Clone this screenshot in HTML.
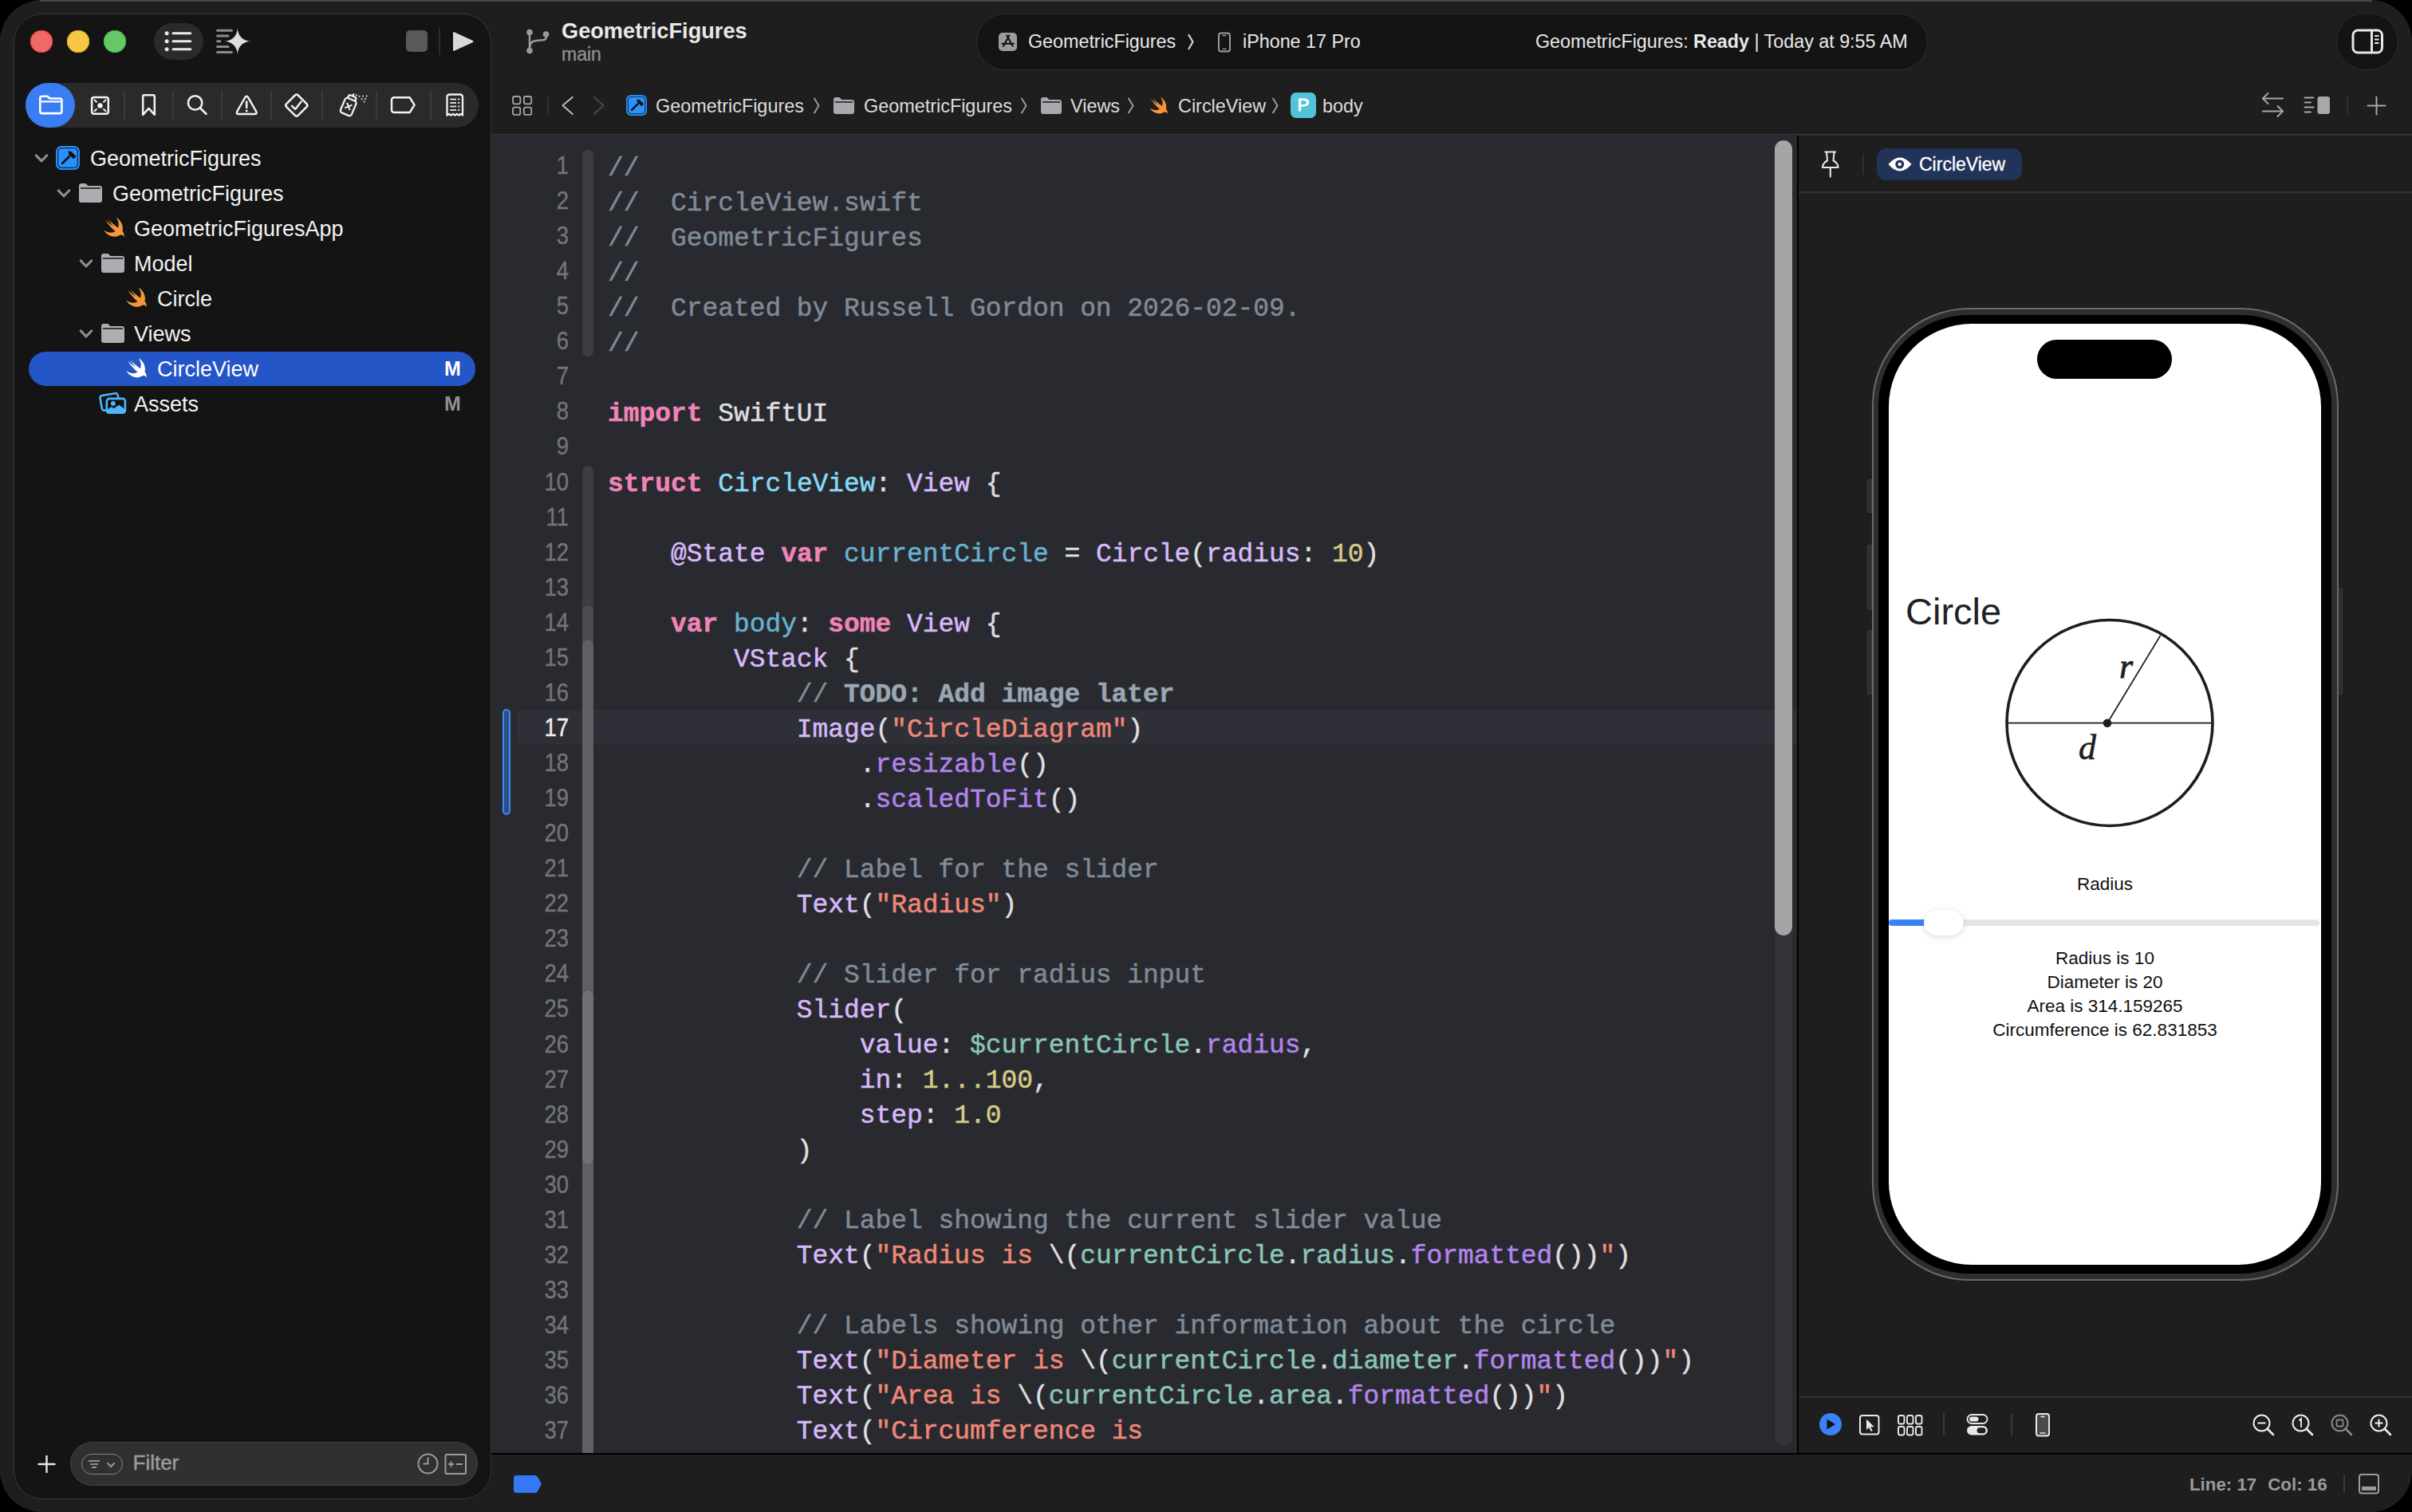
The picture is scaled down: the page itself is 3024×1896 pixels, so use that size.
<!DOCTYPE html>
<html><head><meta charset="utf-8"><title>Xcode</title>
<style>
html,body{margin:0;padding:0;background:#000;width:3024px;height:1896px;overflow:hidden}
*{box-sizing:border-box}
#win{position:absolute;left:0;top:0;width:3024px;height:1896px;border-radius:52px;background:#1e1e1e;overflow:hidden;font-family:"Liberation Sans",sans-serif;color:#e6e6e6}
.a{position:absolute}
.t{position:absolute;white-space:pre;line-height:1}
#side{position:absolute;left:17px;top:17px;width:599px;height:1863px;border-radius:36px;background:#141414;border:1.5px solid #363636}
.tl{position:absolute;width:28px;height:28px;border-radius:50%}
#navpill{position:absolute;left:32px;top:104px;width:568px;height:56px;border-radius:28px;background:#2a2a2a}
#navsel{position:absolute;left:32px;top:104px;width:62px;height:56px;border-radius:28px;background:#3a7cf2}
.navdiv{position:absolute;top:114px;width:2px;height:36px;background:#3a3a3a}
.row{position:absolute;font-size:27px;color:#f2f2f2;line-height:1;white-space:pre}
#sel{position:absolute;left:36px;top:441px;width:560px;height:43px;border-radius:21.5px;background:#2456c8}
#editor{position:absolute;left:616px;top:169px;width:1637px;height:1653px;background:#292a30;overflow:hidden}
.cl{position:absolute;left:146px;height:44px;line-height:44px;font-family:"Liberation Mono",monospace;font-size:32.9px;white-space:pre;-webkit-text-stroke-width:0.5px}
.ln{position:absolute;left:0;width:97px;text-align:right;height:44px;line-height:44px;font-family:"Liberation Sans",sans-serif;font-size:30.5px;color:#747478;transform:scaleX(0.9);transform-origin:97px 50%;-webkit-text-stroke:0.4px currentColor}
.ln.cur{color:#f0f0f0}
#svg{position:absolute;left:0;top:0;width:3024px;height:1896px;pointer-events:none}

.c{color:#7f8b97}
.k{color:#ef85b6}
.td{color:#88daf4}
.od{color:#68b2d2}
.ot{color:#d8b9fb}
.fn{color:#b285ec}
.pv{color:#8ac5b6}
.nu{color:#d6ca86}
.st{color:#ef8878}
.mk{color:#9aa6b3}
.p{color:#dfdfe0}
.k,.mk{font-weight:bold}
</style></head><body>
<div id="win">
<div class="a" style="left:50px;top:0;width:2924px;height:1.5px;background:#4a4a4a"></div>
<!-- sidebar panel -->
<div id="side"></div>
<div class="tl" style="left:38px;top:38px;background:#ee6a67;box-shadow:inset 0 0 0 1px #e2443f"></div>
<div class="tl" style="left:84px;top:38px;background:#f4c845;box-shadow:inset 0 0 0 1px #e0a928"></div>
<div class="tl" style="left:130px;top:38px;background:#66c766;box-shadow:inset 0 0 0 1px #3fb442"></div>
<div class="a" style="left:193px;top:29px;width:62px;height:46px;border-radius:23px;background:#2a2a2a"></div>
<div class="a" style="left:509px;top:38px;width:27px;height:27px;border-radius:5px;background:#595959"></div>
<div class="a" style="left:550px;top:35px;width:2px;height:34px;background:#2c2c2c"></div>

<div id="navpill"></div>
<div id="navsel"></div>
<div class="navdiv" style="left:155px"></div>
<div class="navdiv" style="left:216px"></div>
<div class="navdiv" style="left:277px"></div>
<div class="navdiv" style="left:339px"></div>
<div class="navdiv" style="left:403px"></div>
<div class="navdiv" style="left:471px"></div>
<div class="navdiv" style="left:539px"></div>

<div id="sel"></div>
<div class="row" style="left:113px;top:186.2px">GeometricFigures</div>
<div class="row" style="left:141px;top:230.2px">GeometricFigures</div>
<div class="row" style="left:168px;top:274.2px">GeometricFiguresApp</div>
<div class="row" style="left:168px;top:318.2px">Model</div>
<div class="row" style="left:197px;top:362.2px">Circle</div>
<div class="row" style="left:168px;top:406.2px">Views</div>
<div class="row" style="left:197px;top:450.2px;color:#fff">CircleView</div>
<div class="row" style="left:557px;top:450.2px;color:#fff;font-weight:bold;font-size:25px">M</div>
<div class="row" style="left:168px;top:494.2px">Assets</div>
<div class="row" style="left:557px;top:494.2px;color:#8f8f8f;font-weight:bold;font-size:25px">M</div>

<!-- filter bar -->
<div class="a" style="left:88px;top:1808px;width:511px;height:55px;border-radius:27.5px;background:#303030;border:1.5px solid #444"></div>
<div class="a" style="left:102px;top:1823px;width:51.5px;height:26px;border-radius:13px;border:1.8px solid #858585"></div>
<div class="t" style="left:166.5px;top:1821px;font-size:26px;color:#9b9b9b;-webkit-text-stroke:0.5px #9b9b9b">Filter</div>

<!-- toolbar title -->
<div class="t" style="left:704px;top:25px;font-size:27.2px;font-weight:bold;color:#e8e8e8">GeometricFigures</div>
<div class="t" style="left:704px;top:57px;font-size:23px;color:#8f8f8f;-webkit-text-stroke:0.4px #8f8f8f">main</div>

<!-- scheme pill -->
<div class="a" style="left:1224px;top:17px;width:1193px;height:71px;border-radius:35.5px;background:#141414;border:1.5px solid #2e2e2e"></div>
<div class="a" style="left:1252px;top:41px;width:23px;height:23px;border-radius:5px;background:#9b9b9b"></div>
<div class="t" style="left:1289px;top:40.7px;font-size:23.3px;color:#e8e8e8">GeometricFigures</div>
<div class="t" style="left:1558px;top:40.7px;font-size:23.3px;color:#e8e8e8">iPhone 17 Pro</div>
<div class="t" style="left:1925px;top:40.7px;font-size:23.3px;color:#e8e8e8">GeometricFigures: <b>Ready</b> | Today at 9:55 AM</div>

<!-- inspector button -->
<div class="a" style="left:2929px;top:16px;width:78px;height:72px;border-radius:36px;background:#141414;border:1.5px solid #2e2e2e"></div>

<!-- breadcrumb -->
<div class="a" style="left:1618px;top:116px;width:32px;height:32px;border-radius:7px;background:#52c3d8"></div>
<div class="t" style="left:1626.5px;top:121px;font-size:22.5px;color:#fff;-webkit-text-stroke:0.8px #fff">P</div>
<div class="t" style="left:822px;top:122px;font-size:23.4px;color:#dcdcdc">GeometricFigures</div>
<div class="t" style="left:1083px;top:122px;font-size:23.4px;color:#dcdcdc">GeometricFigures</div>
<div class="t" style="left:1342px;top:122px;font-size:23.4px;color:#dcdcdc">Views</div>
<div class="t" style="left:1477px;top:122px;font-size:23.4px;color:#dcdcdc">CircleView</div>
<div class="t" style="left:1658px;top:122px;font-size:23.4px;color:#dcdcdc">body</div>

<!-- separator below toolbar -->
<div class="a" style="left:616px;top:168px;width:2408px;height:1.5px;background:#343434"></div>

<!-- editor -->
<div id="editor">
  <div class="a" style="left:32px;top:721px;width:1605px;height:44px;border-radius:7px 0 0 7px;background:#2f3037"></div>
  <div class="a" style="left:14px;top:720px;width:10px;height:133px;border-radius:5px;background:#2c4f82;border:2px solid #3d8bf7"></div>
  <div class="a" style="left:114px;top:19px;width:14px;height:259px;border-radius:7px;background:#3c3d42"></div>
  <div class="a" style="left:114px;top:415px;width:14px;height:1300px;border-radius:7px;background:#3c3d42"></div>
  <div class="a" style="left:114px;top:590px;width:14px;height:1200px;border-radius:7px;background:#4b4c51;box-shadow:0 -1px 0 #35363b"></div>
  <div class="a" style="left:114px;top:633px;width:14px;height:1100px;border-radius:7px;background:#5f6065;box-shadow:0 -1px 0 #45464b"></div>
  <div class="a" style="left:114px;top:1073px;width:14px;height:218px;border-radius:7px;background:#717175;box-shadow:0 -1px 0 #55565b,0 1px 0 #55565b"></div>
<div class="ln" style="top:16.0px">1</div>
<div class="ln" style="top:60.06px">2</div>
<div class="ln" style="top:104.12px">3</div>
<div class="ln" style="top:148.18px">4</div>
<div class="ln" style="top:192.24px">5</div>
<div class="ln" style="top:236.3px">6</div>
<div class="ln" style="top:280.36px">7</div>
<div class="ln" style="top:324.42px">8</div>
<div class="ln" style="top:368.48px">9</div>
<div class="ln" style="top:412.54px">10</div>
<div class="ln" style="top:456.6px">11</div>
<div class="ln" style="top:500.66px">12</div>
<div class="ln" style="top:544.72px">13</div>
<div class="ln" style="top:588.78px">14</div>
<div class="ln" style="top:632.84px">15</div>
<div class="ln" style="top:676.9000000000001px">16</div>
<div class="ln cur" style="top:720.96px">17</div>
<div class="ln" style="top:765.02px">18</div>
<div class="ln" style="top:809.08px">19</div>
<div class="ln" style="top:853.1400000000001px">20</div>
<div class="ln" style="top:897.2px">21</div>
<div class="ln" style="top:941.26px">22</div>
<div class="ln" style="top:985.32px">23</div>
<div class="ln" style="top:1029.38px">24</div>
<div class="ln" style="top:1073.44px">25</div>
<div class="ln" style="top:1117.5px">26</div>
<div class="ln" style="top:1161.56px">27</div>
<div class="ln" style="top:1205.6200000000001px">28</div>
<div class="ln" style="top:1249.68px">29</div>
<div class="ln" style="top:1293.74px">30</div>
<div class="ln" style="top:1337.8000000000002px">31</div>
<div class="ln" style="top:1381.8600000000001px">32</div>
<div class="ln" style="top:1425.92px">33</div>
<div class="ln" style="top:1469.98px">34</div>
<div class="ln" style="top:1514.04px">35</div>
<div class="ln" style="top:1558.1000000000001px">36</div>
<div class="ln" style="top:1602.16px">37</div>
<div class="cl" style="top:20.5px"><span class="c">//</span></div>
<div class="cl" style="top:64.5px"><span class="c">//  CircleView.swift</span></div>
<div class="cl" style="top:108.5px"><span class="c">//  GeometricFigures</span></div>
<div class="cl" style="top:152.5px"><span class="c">//</span></div>
<div class="cl" style="top:196.5px"><span class="c">//  Created by Russell Gordon on 2026-02-09.</span></div>
<div class="cl" style="top:240.5px"><span class="c">//</span></div>
<div class="cl" style="top:284.5px"></div>
<div class="cl" style="top:328.5px"><span class="k">import</span><span class="p"> SwiftUI</span></div>
<div class="cl" style="top:372.5px"></div>
<div class="cl" style="top:416.5px"><span class="k">struct</span><span class="p"> </span><span class="td">CircleView</span><span class="p">: </span><span class="ot">View</span><span class="p"> {</span></div>
<div class="cl" style="top:460.5px"></div>
<div class="cl" style="top:504.5px"><span class="p">    </span><span class="ot">@State</span><span class="p"> </span><span class="k">var</span><span class="p"> </span><span class="od">currentCircle</span><span class="p"> = </span><span class="ot">Circle</span><span class="p">(</span><span class="ot">radius</span><span class="p">: </span><span class="nu">10</span><span class="p">)</span></div>
<div class="cl" style="top:548.5px"></div>
<div class="cl" style="top:592.5px"><span class="p">    </span><span class="k">var</span><span class="p"> </span><span class="od">body</span><span class="p">: </span><span class="k">some</span><span class="p"> </span><span class="ot">View</span><span class="p"> {</span></div>
<div class="cl" style="top:636.5px"><span class="p">        </span><span class="ot">VStack</span><span class="p"> {</span></div>
<div class="cl" style="top:680.5px"><span class="p">            </span><span class="c">// </span><span class="mk">TODO: Add image later</span></div>
<div class="cl" style="top:724.5px"><span class="p">            </span><span class="ot">Image</span><span class="p">(</span><span class="st">&quot;CircleDiagram&quot;</span><span class="p">)</span></div>
<div class="cl" style="top:768.5px"><span class="p">                .</span><span class="fn">resizable</span><span class="p">()</span></div>
<div class="cl" style="top:812.5px"><span class="p">                .</span><span class="fn">scaledToFit</span><span class="p">()</span></div>
<div class="cl" style="top:856.5px"></div>
<div class="cl" style="top:900.5px"><span class="p">            </span><span class="c">// Label for the slider</span></div>
<div class="cl" style="top:944.5px"><span class="p">            </span><span class="ot">Text</span><span class="p">(</span><span class="st">&quot;Radius&quot;</span><span class="p">)</span></div>
<div class="cl" style="top:988.5px"></div>
<div class="cl" style="top:1032.5px"><span class="p">            </span><span class="c">// Slider for radius input</span></div>
<div class="cl" style="top:1076.5px"><span class="p">            </span><span class="ot">Slider</span><span class="p">(</span></div>
<div class="cl" style="top:1120.5px"><span class="p">                </span><span class="ot">value</span><span class="p">: </span><span class="pv">$currentCircle</span><span class="p">.</span><span class="fn">radius</span><span class="p">,</span></div>
<div class="cl" style="top:1164.5px"><span class="p">                </span><span class="ot">in</span><span class="p">: </span><span class="nu">1...100</span><span class="p">,</span></div>
<div class="cl" style="top:1208.5px"><span class="p">                </span><span class="ot">step</span><span class="p">: </span><span class="nu">1.0</span></div>
<div class="cl" style="top:1252.5px"><span class="p">            )</span></div>
<div class="cl" style="top:1296.5px"></div>
<div class="cl" style="top:1340.5px"><span class="p">            </span><span class="c">// Label showing the current slider value</span></div>
<div class="cl" style="top:1384.5px"><span class="p">            </span><span class="ot">Text</span><span class="p">(</span><span class="st">&quot;Radius is </span><span class="p">\(</span><span class="pv">currentCircle</span><span class="p">.</span><span class="pv">radius</span><span class="p">.</span><span class="fn">formatted</span><span class="p">())</span><span class="st">&quot;</span><span class="p">)</span></div>
<div class="cl" style="top:1428.5px"></div>
<div class="cl" style="top:1472.5px"><span class="p">            </span><span class="c">// Labels showing other information about the circle</span></div>
<div class="cl" style="top:1516.5px"><span class="p">            </span><span class="ot">Text</span><span class="p">(</span><span class="st">&quot;Diameter is </span><span class="p">\(</span><span class="pv">currentCircle</span><span class="p">.</span><span class="pv">diameter</span><span class="p">.</span><span class="fn">formatted</span><span class="p">())</span><span class="st">&quot;</span><span class="p">)</span></div>
<div class="cl" style="top:1560.5px"><span class="p">            </span><span class="ot">Text</span><span class="p">(</span><span class="st">&quot;Area is </span><span class="p">\(</span><span class="pv">currentCircle</span><span class="p">.</span><span class="pv">area</span><span class="p">.</span><span class="fn">formatted</span><span class="p">())</span><span class="st">&quot;</span><span class="p">)</span></div>
<div class="cl" style="top:1604.5px"><span class="p">            </span><span class="ot">Text</span><span class="p">(</span><span class="st">&quot;Circumference is</span></div>
  <div class="a" style="left:1609px;top:7px;width:22px;height:1637px;border-radius:11px;background:#333439"></div>
  <div class="a" style="left:1609px;top:7px;width:22px;height:997px;border-radius:11px;background:#a5a5a7"></div>
</div>
<div class="a" style="left:2253px;top:170px;width:2px;height:1654px;background:#000"></div>
<div class="a" style="left:616px;top:1822px;width:2408px;height:2px;background:#000"></div>

<!-- preview header -->
<div class="a" style="left:2335px;top:193px;width:1.5px;height:26px;background:#2f2f2f"></div>
<div class="a" style="left:2353px;top:186.2px;width:182px;height:40px;border-radius:12px;background:#22335a"></div>
<div class="t" style="left:2406px;top:195px;font-size:23px;color:#fff;-webkit-text-stroke:0.3px #fff">CircleView</div>
<div class="a" style="left:2255px;top:240px;width:769px;height:1.5px;background:#343434"></div>
<div class="a" style="left:2255px;top:1751px;width:769px;height:1.5px;background:#343434"></div>

<!-- phone -->
<div class="a" style="left:2341px;top:601px;width:6px;height:42px;border-radius:2px 0 0 2px;background:#2e2e2e;border:1px solid #3d3d3d"></div>
<div class="a" style="left:2341px;top:683px;width:6px;height:82px;border-radius:2px 0 0 2px;background:#2e2e2e;border:1px solid #3d3d3d"></div>
<div class="a" style="left:2341px;top:790px;width:6px;height:81px;border-radius:2px 0 0 2px;background:#2e2e2e;border:1px solid #3d3d3d"></div>
<div class="a" style="left:2931px;top:738px;width:6px;height:133px;border-radius:0 2px 2px 0;background:#2e2e2e;border:1px solid #3d3d3d"></div>
<div class="a" style="left:2346.5px;top:386px;width:585.5px;height:1220px;border-radius:122px;background:#2e2e2e;border:2px solid #6a6a6a"></div>
<div class="a" style="left:2355px;top:395px;width:568px;height:1202px;border-radius:113px;background:#000"></div>
<div class="a" style="left:2368px;top:406.2px;width:542px;height:1180px;border-radius:104px;background:#fff;overflow:hidden">
  <div class="a" style="left:186px;top:20px;width:169px;height:49px;border-radius:24.5px;background:#000"></div>
  <div class="t" style="left:21px;top:337px;font-size:47px;color:#222">Circle</div>
  <div class="t" style="left:0;width:542px;text-align:center;top:692px;font-size:22.5px;color:#111">Radius</div>
  <div class="a" style="left:0;top:747px;width:540px;height:8px;border-radius:4px;background:#e5e5ea"></div>
  <div class="a" style="left:0;top:747px;width:50px;height:8px;border-radius:4px 0 0 4px;background:#3a82f7"></div>
  <div class="a" style="left:44px;top:735px;width:50px;height:32px;border-radius:16px;background:#fff;box-shadow:0 2px 8px rgba(0,0,0,.13),0 0 1px rgba(0,0,0,.15)"></div>
  <div class="t" style="left:0;width:542px;text-align:center;top:781px;font-size:22.5px;line-height:29.9px;color:#111">Radius is 10<br>Diameter is 20<br>Area is 314.159265<br>Circumference is 62.831853</div>
</div>

<!-- status bar -->
<div class="t" style="left:2745px;top:1851px;font-size:22.3px;color:#9b9b9b;font-weight:bold">Line: 17<span style="margin-left:14px">Col: 16</span></div>
<div class="a" style="left:2938px;top:1849px;width:1.5px;height:23px;background:#3a3a3a"></div>

<svg id="svg" width="3024" height="1896" viewBox="0 0 3024 1896">
<circle cx="209.1" cy="41.8" r="2.5" fill="#e8e8e8"/>
<line x1="217" y1="41.8" x2="238.7" y2="41.8" stroke="#e8e8e8" stroke-width="3" stroke-linecap="round"/>
<circle cx="209.1" cy="51.7" r="2.5" fill="#e8e8e8"/>
<line x1="217" y1="51.7" x2="238.7" y2="51.7" stroke="#e8e8e8" stroke-width="3" stroke-linecap="round"/>
<circle cx="209.1" cy="61.7" r="2.5" fill="#e8e8e8"/>
<line x1="217" y1="61.7" x2="238.7" y2="61.7" stroke="#e8e8e8" stroke-width="3" stroke-linecap="round"/>
<line x1="272.5" y1="38.2" x2="290.5" y2="38.2" stroke="#8a8a8a" stroke-width="3" stroke-linecap="round"/>
<line x1="272.5" y1="45" x2="286" y2="45" stroke="#8a8a8a" stroke-width="3" stroke-linecap="round"/>
<line x1="272.5" y1="51.7" x2="276" y2="51.7" stroke="#8a8a8a" stroke-width="3" stroke-linecap="round"/>
<line x1="272.5" y1="58.4" x2="286" y2="58.4" stroke="#8a8a8a" stroke-width="3" stroke-linecap="round"/>
<line x1="272.5" y1="65.4" x2="290.5" y2="65.4" stroke="#8a8a8a" stroke-width="3" stroke-linecap="round"/>
<path d="M297.8,34.400000000000006 C297.8,44.78 304.72,51.7 315.1,51.7 C304.72,51.7 297.8,58.620000000000005 297.8,69.0 C297.8,58.620000000000005 290.88,51.7 280.5,51.7 C290.88,51.7 297.8,44.78 297.8,34.400000000000006z" fill="#dcdcdc" stroke="#141414" stroke-width="2.5" stroke-linejoin="round" paint-order="stroke"/>
<path d="M570,40.5 Q568,39.3 568,41.6 L568,62.4 Q568,64.7 570,63.5 L592.5,53.2 Q594.5,52 592.5,50.8z" fill="#d9d9d9"/>
<path d="M50.3,123 a2.3,2.3 0 0 1 2.3,-2.3 h6.8 l3,2.8 h12.7 a2.3,2.3 0 0 1 2.3,2.3 v14 a2.3,2.3 0 0 1 -2.3,2.3 h-22.5 a2.3,2.3 0 0 1 -2.3,-2.3z" fill="none" stroke="#fff" stroke-width="2.6" stroke-linejoin="round"/>
<line x1="52" y1="127.3" x2="75.8" y2="127.3" stroke="#fff" stroke-width="2.2"/>
<rect x="115.1" y="122" width="20.7" height="20.7" rx="2.8" fill="none" stroke="#f2f2f2" stroke-width="2.5"/>
<circle cx="125.5" cy="132.4" r="3.2" fill="#f2f2f2"/>
<line x1="120.9" y1="127.80000000000001" x2="118.5" y2="125.4" stroke="#f2f2f2" stroke-width="2" stroke-linecap="round"/>
<line x1="130.1" y1="127.80000000000001" x2="132.5" y2="125.4" stroke="#f2f2f2" stroke-width="2" stroke-linecap="round"/>
<line x1="120.9" y1="137.0" x2="118.5" y2="139.4" stroke="#f2f2f2" stroke-width="2" stroke-linecap="round"/>
<line x1="130.1" y1="137.0" x2="132.5" y2="139.4" stroke="#f2f2f2" stroke-width="2" stroke-linecap="round"/>
<path d="M179.2,121 a1.8,1.8 0 0 1 1.8,-1.8 h11 a1.8,1.8 0 0 1 1.8,1.8 v22.8 l-7.3,-8 l-7.3,8z" fill="none" stroke="#f2f2f2" stroke-width="2.5" stroke-linejoin="round"/>
<circle cx="244.6" cy="128.9" r="8.7" fill="none" stroke="#f2f2f2" stroke-width="2.5"/>
<line x1="250.9" y1="135.2" x2="258.4" y2="142.7" stroke="#f2f2f2" stroke-width="2.7" stroke-linecap="round"/>
<path d="M307.1,122.5 Q309.2,119 311.3,122.5 L321,139.5 Q323,143 319,143 L299.4,143 Q295.4,143 297.4,139.5z" fill="none" stroke="#f2f2f2" stroke-width="2.5" stroke-linejoin="round"/>
<line x1="309.2" y1="127.5" x2="309.2" y2="135" stroke="#f2f2f2" stroke-width="2.6" stroke-linecap="round"/>
<circle cx="309.2" cy="139" r="1.5" fill="#f2f2f2"/>
<path d="M369.8,119.5 Q371.8,117.5 373.8,119.5 L384.4,130.1 Q386.4,132.1 384.4,134.1 L373.8,144.7 Q371.8,146.7 369.8,144.7 L359.2,134.1 Q357.2,132.1 359.2,130.1z" fill="none" stroke="#f2f2f2" stroke-width="2.5" stroke-linejoin="round"/>
<polyline points="366,132.8 370.2,137 377.6,127.4" fill="none" stroke="#f2f2f2" stroke-width="2.4" stroke-linecap="round" stroke-linejoin="round"/>
<g transform="translate(-2.6,0) rotate(23 440 131)"><rect x="433" y="124" width="15" height="20" rx="3" fill="none" stroke="#f2f2f2" stroke-width="2.3"/><path d="M435.5,124 v-2.5 a2,2 0 0 1 2,-2 h6 a2,2 0 0 1 2,2 v2.5" fill="none" stroke="#f2f2f2" stroke-width="2.3"/><line x1="440.5" y1="119.5" x2="440.5" y2="116" stroke="#f2f2f2" stroke-width="2.3"/><path d="M437,130 l7,7 M444,130 l-7,7" stroke="#f2f2f2" stroke-width="2"/></g>
<circle cx="446.9" cy="119.2" r="1" fill="#f2f2f2"/>
<circle cx="450.6" cy="120.8" r="1" fill="#f2f2f2"/>
<circle cx="455" cy="120.6" r="1" fill="#f2f2f2"/>
<circle cx="459.6" cy="120.4" r="1" fill="#f2f2f2"/>
<circle cx="453.6" cy="124.2" r="1" fill="#f2f2f2"/>
<circle cx="458" cy="124" r="1" fill="#f2f2f2"/>
<circle cx="456.5" cy="127.6" r="1" fill="#f2f2f2"/>
<path d="M494,122.3 h19.8 l5.8,9.3 l-5.8,9.3 h-19.8 a3,3 0 0 1 -3,-3 v-12.6 a3,3 0 0 1 3,-3z" fill="none" stroke="#f2f2f2" stroke-width="2.5" stroke-linejoin="round"/>
<path d="M560.5,144.5 v-23 a3,3 0 0 1 3,-3 h13.5 a3,3 0 0 1 3,3 v23 l-2.4,-1.6 l-2.4,1.6 l-2.4,-1.6 l-2.4,1.6 l-2.4,-1.6 l-2.4,1.6 l-2.4,-1.6 l-2.4,1.6z" fill="none" stroke="#f2f2f2" stroke-width="2.3" stroke-linejoin="round"/>
<line x1="564.3" y1="124.5" x2="572" y2="124.5" stroke="#f2f2f2" stroke-width="1.7"/><line x1="574" y1="124.5" x2="576.3" y2="124.5" stroke="#f2f2f2" stroke-width="1.7"/>
<line x1="564.3" y1="129" x2="572" y2="129" stroke="#f2f2f2" stroke-width="1.7"/><line x1="574" y1="129" x2="576.3" y2="129" stroke="#f2f2f2" stroke-width="1.7"/>
<line x1="564.3" y1="133.5" x2="572" y2="133.5" stroke="#f2f2f2" stroke-width="1.7"/><line x1="574" y1="133.5" x2="576.3" y2="133.5" stroke="#f2f2f2" stroke-width="1.7"/>
<line x1="564.3" y1="138" x2="572" y2="138" stroke="#f2f2f2" stroke-width="1.7"/><line x1="574" y1="138" x2="576.3" y2="138" stroke="#f2f2f2" stroke-width="1.7"/>
<polyline points="45.2,194.89999999999998 52,201.89999999999998 58.8,194.89999999999998" fill="none" stroke="#8e8e8e" stroke-width="3" stroke-linecap="round" stroke-linejoin="round"/>
<rect x="70" y="183" width="30" height="30" rx="7.0" fill="#2b90f8"/><rect x="72.6" y="185.6" width="24.8" height="24.8" rx="4.8" fill="none" stroke="#0d2f55" stroke-width="1.3"/><g transform="translate(70,183) scale(1.0) rotate(45 15 15)"><rect x="13.6" y="11" width="2.8" height="15" rx="1.4" fill="#111"/><path d="M9.3,8.6 L12.6,6.2 L21.2,6.2 L21.2,10.9 L12.6,10.9z" fill="#111"/></g>
<polyline points="73.2,238.89999999999998 80,245.89999999999998 86.8,238.89999999999998" fill="none" stroke="#8e8e8e" stroke-width="3" stroke-linecap="round" stroke-linejoin="round"/>
<path d="M102,230 h5.4399999999999995 l3,3 h14.560000000000002 a3,3 0 0 1 3,3 v15 a3,3 0 0 1 -3,3 h-23 a3,3 0 0 1 -3,-3 v-18 a3,3 0 0 1 3,-3 z" fill="#aeadb2"/><line x1="101.5" y1="236" x2="125.5" y2="236" stroke="#141414" stroke-width="1.6" stroke-linecap="round"/>
<path d="M13.543 3.41c4.114 2.47 6.545 7.162 5.549 11.131-.024.093-.05.181-.076.272l.002.001c2.062 2.538 1.5 5.258 1.236 4.745-1.072-2.086-3.066-1.568-4.088-1.043a6.803 6.803 0 0 1-.281.158l-.02.012-.002.002c-2.115 1.123-4.957 1.205-7.812-.022a12.568 12.568 0 0 1-5.64-4.838c.649.48 1.35.902 2.097 1.252 3.019 1.414 6.051 1.311 8.197-.002C9.651 12.73 7.101 9.67 5.146 7.191a10.628 10.628 0 0 1-1.005-1.384c2.34 2.142 6.038 4.83 7.365 5.576C8.69 8.408 6.208 4.743 6.324 4.86c4.436 4.47 8.528 6.996 8.528 6.996.154.085.27.154.36.213.085-.215.16-.437.224-.668.708-2.588-.09-5.548-1.893-7.992z" fill="#f7953a" transform="translate(126.33,267.35) scale(1.4300,1.5089)"/>
<polyline points="101.2,326.9 108,333.9 114.8,326.9" fill="none" stroke="#8e8e8e" stroke-width="3" stroke-linecap="round" stroke-linejoin="round"/>
<path d="M130,318 h5.4399999999999995 l3,3 h14.560000000000002 a3,3 0 0 1 3,3 v15 a3,3 0 0 1 -3,3 h-23 a3,3 0 0 1 -3,-3 v-18 a3,3 0 0 1 3,-3 z" fill="#aeadb2"/><line x1="129.5" y1="324" x2="153.5" y2="324" stroke="#141414" stroke-width="1.6" stroke-linecap="round"/>
<path d="M13.543 3.41c4.114 2.47 6.545 7.162 5.549 11.131-.024.093-.05.181-.076.272l.002.001c2.062 2.538 1.5 5.258 1.236 4.745-1.072-2.086-3.066-1.568-4.088-1.043a6.803 6.803 0 0 1-.281.158l-.02.012-.002.002c-2.115 1.123-4.957 1.205-7.812-.022a12.568 12.568 0 0 1-5.64-4.838c.649.48 1.35.902 2.097 1.252 3.019 1.414 6.051 1.311 8.197-.002C9.651 12.73 7.101 9.67 5.146 7.191a10.628 10.628 0 0 1-1.005-1.384c2.34 2.142 6.038 4.83 7.365 5.576C8.69 8.408 6.208 4.743 6.324 4.86c4.436 4.47 8.528 6.996 8.528 6.996.154.085.27.154.36.213.085-.215.16-.437.224-.668.708-2.588-.09-5.548-1.893-7.992z" fill="#f7953a" transform="translate(154.33,355.35) scale(1.4300,1.5089)"/>
<polyline points="101.2,414.9 108,421.9 114.8,414.9" fill="none" stroke="#8e8e8e" stroke-width="3" stroke-linecap="round" stroke-linejoin="round"/>
<path d="M130,406 h5.4399999999999995 l3,3 h14.560000000000002 a3,3 0 0 1 3,3 v15 a3,3 0 0 1 -3,3 h-23 a3,3 0 0 1 -3,-3 v-18 a3,3 0 0 1 3,-3 z" fill="#aeadb2"/><line x1="129.5" y1="412" x2="153.5" y2="412" stroke="#141414" stroke-width="1.6" stroke-linecap="round"/>
<path d="M13.543 3.41c4.114 2.47 6.545 7.162 5.549 11.131-.024.093-.05.181-.076.272l.002.001c2.062 2.538 1.5 5.258 1.236 4.745-1.072-2.086-3.066-1.568-4.088-1.043a6.803 6.803 0 0 1-.281.158l-.02.012-.002.002c-2.115 1.123-4.957 1.205-7.812-.022a12.568 12.568 0 0 1-5.64-4.838c.649.48 1.35.902 2.097 1.252 3.019 1.414 6.051 1.311 8.197-.002C9.651 12.73 7.101 9.67 5.146 7.191a10.628 10.628 0 0 1-1.005-1.384c2.34 2.142 6.038 4.83 7.365 5.576C8.69 8.408 6.208 4.743 6.324 4.86c4.436 4.47 8.528 6.996 8.528 6.996.154.085.27.154.36.213.085-.215.16-.437.224-.668.708-2.588-.09-5.548-1.893-7.992z" fill="#ffffff" transform="translate(154.33,443.85) scale(1.4300,1.5089)"/>
<rect x="126.5" y="494.5" width="22.5" height="19" rx="3" fill="none" stroke="#4db5fa" stroke-width="2.6" transform="rotate(-10 137.7 504)"/><rect x="133.8" y="499.9" width="23.1" height="17.9" rx="3.2" fill="#141414" stroke="#4db5fa" stroke-width="2.6"/><path d="M135,513.2 L140,510 L142.4,512.3 L149.2,507.8 L156,512.4 L156,516.5 Q156,517.5 155,517.5 L136,517.5 Q135,517.5 135,516.5z" fill="#4db5fa"/><circle cx="141.9" cy="506" r="2.9" fill="#4db5fa"/>
<g stroke="#8f8f8f" stroke-width="2.2"><line x1="110.8" y1="1832" x2="125.1" y2="1832"/><line x1="113" y1="1836" x2="123" y2="1836"/><line x1="115" y1="1840" x2="121" y2="1840"/></g><polyline points="134.4,1834.3 139.1,1839 143.8,1834.3" fill="none" stroke="#8f8f8f" stroke-width="2.3" stroke-linejoin="miter"/>
<line x1="58.5" y1="1826" x2="58.5" y2="1846" stroke="#e8e8e8" stroke-width="2.4" stroke-linecap="round"/><line x1="48.5" y1="1836" x2="68.5" y2="1836" stroke="#e8e8e8" stroke-width="2.4" stroke-linecap="round"/>
<circle cx="536.5" cy="1835.5" r="12" fill="none" stroke="#9b9b9b" stroke-width="2"/><polyline points="536.5,1827.5 536.5,1835.5 530.5,1835.5" fill="none" stroke="#9b9b9b" stroke-width="2"/>
<rect x="558.5" y="1824" width="25.5" height="24" rx="1.5" fill="none" stroke="#9b9b9b" stroke-width="2"/><path d="M562,1836 h7 M565.5,1832.5 v7 M572,1836 h8" stroke="#9b9b9b" stroke-width="2"/>
<g fill="none" stroke="#9a9a9a" stroke-width="2.6" stroke-linecap="round"><line x1="664" y1="41" x2="664" y2="63"/><path d="M664,60 q0,-8 8,-9 l10,-1 q3,-0.5 3,-5"/></g><g fill="#9a9a9a"><circle cx="664" cy="40.5" r="3.8"/><circle cx="664" cy="63.5" r="3.8"/><circle cx="684.5" cy="43" r="3.8"/></g>
<g stroke="#111" stroke-width="2" stroke-linecap="round" fill="none"><path d="M1265.2,44.5 l-7.2,13.3 M1262.3,44.5 l7.4,13.3 M1256.5,54.8 h14.4"/></g>
<polyline points="1490.5,44 1495.5,52.5 1490.5,61" fill="none" stroke="#d8d8d8" stroke-width="2.2" stroke-linecap="round" stroke-linejoin="round"/>
<rect x="1528" y="41.5" width="14" height="23" rx="3" fill="none" stroke="#9b9b9b" stroke-width="2"/><line x1="1532.5" y1="44.5" x2="1537.5" y2="44.5" stroke="#9b9b9b" stroke-width="1.5"/><line x1="1532.5" y1="61.5" x2="1537.5" y2="61.5" stroke="#9b9b9b" stroke-width="1.5"/>
<rect x="2950" y="38" width="36.5" height="28" rx="6" fill="none" stroke="#e6e6e6" stroke-width="3"/><line x1="2973.5" y1="38" x2="2973.5" y2="66" stroke="#e6e6e6" stroke-width="3"/><g stroke="#e6e6e6" stroke-width="2" stroke-linecap="round"><line x1="2977.8" y1="45" x2="2981.8" y2="45"/><line x1="2977.8" y1="49.5" x2="2981.8" y2="49.5"/><line x1="2977.8" y1="54" x2="2981.8" y2="54"/></g>
<g fill="none" stroke="#a6a6a6" stroke-width="1.8"><rect x="643" y="121" width="9.3" height="9.3" rx="2.2"/><rect x="656.9" y="121" width="9.3" height="9.3" rx="2.2"/><rect x="643" y="134.6" width="9.3" height="9.3" rx="2.2"/><rect x="656.9" y="134.6" width="9.3" height="9.3" rx="2.2"/></g>
<line x1="687" y1="121" x2="687" y2="143" stroke="#3a3a3a" stroke-width="1.5"/>
<polyline points="717.8,121.8 705.5,132.3 717.8,143" fill="none" stroke="#b8b8b8" stroke-width="2" stroke-linecap="round" stroke-linejoin="round"/>
<polyline points="745,121.8 756.5,132.3 745,143" fill="none" stroke="#4a4a4a" stroke-width="2" stroke-linecap="round" stroke-linejoin="round"/>
<rect x="785" y="119" width="26" height="26" rx="6.066666666666666" fill="#2b90f8"/><rect x="787.2533333333333" y="121.25333333333333" width="21.493333333333332" height="21.493333333333332" rx="4.16" fill="none" stroke="#0d2f55" stroke-width="1.1266666666666667"/><g transform="translate(785,119) scale(0.8666666666666667) rotate(45 15 15)"><rect x="13.6" y="11" width="2.8" height="15" rx="1.4" fill="#111"/><path d="M9.3,8.6 L12.6,6.2 L21.2,6.2 L21.2,10.9 L12.6,10.9z" fill="#111"/></g>
<polyline points="1021,123.5 1026.5,132.5 1021,141.5" fill="none" stroke="#9a9a9a" stroke-width="2" stroke-linecap="round" stroke-linejoin="round"/>
<polyline points="1281,123.5 1286.5,132.5 1281,141.5" fill="none" stroke="#9a9a9a" stroke-width="2" stroke-linecap="round" stroke-linejoin="round"/>
<polyline points="1415,123.5 1420.5,132.5 1415,141.5" fill="none" stroke="#9a9a9a" stroke-width="2" stroke-linecap="round" stroke-linejoin="round"/>
<polyline points="1596,123.5 1601.5,132.5 1596,141.5" fill="none" stroke="#9a9a9a" stroke-width="2" stroke-linecap="round" stroke-linejoin="round"/>
<path d="M1048,122 h4.359999999999999 l3,3 h12.64 a3,3 0 0 1 3,3 v12 a3,3 0 0 1 -3,3 h-20 a3,3 0 0 1 -3,-3 v-15 a3,3 0 0 1 3,-3 z" fill="#a9a8ad"/><line x1="1047.5" y1="128" x2="1068.5" y2="128" stroke="#1e1e1e" stroke-width="1.6" stroke-linecap="round"/>
<path d="M1308,122 h4.359999999999999 l3,3 h12.64 a3,3 0 0 1 3,3 v12 a3,3 0 0 1 -3,3 h-20 a3,3 0 0 1 -3,-3 v-15 a3,3 0 0 1 3,-3 z" fill="#a9a8ad"/><line x1="1307.5" y1="128" x2="1328.5" y2="128" stroke="#1e1e1e" stroke-width="1.6" stroke-linecap="round"/>
<path d="M13.543 3.41c4.114 2.47 6.545 7.162 5.549 11.131-.024.093-.05.181-.076.272l.002.001c2.062 2.538 1.5 5.258 1.236 4.745-1.072-2.086-3.066-1.568-4.088-1.043a6.803 6.803 0 0 1-.281.158l-.02.012-.002.002c-2.115 1.123-4.957 1.205-7.812-.022a12.568 12.568 0 0 1-5.64-4.838c.649.48 1.35.902 2.097 1.252 3.019 1.414 6.051 1.311 8.197-.002C9.651 12.73 7.101 9.67 5.146 7.191a10.628 10.628 0 0 1-1.005-1.384c2.34 2.142 6.038 4.83 7.365 5.576C8.69 8.408 6.208 4.743 6.324 4.86c4.436 4.47 8.528 6.996 8.528 6.996.154.085.27.154.36.213.085-.215.16-.437.224-.668.708-2.588-.09-5.548-1.893-7.992z" fill="#f7953a" transform="translate(1437.91,117.06) scale(1.2574,1.3018)"/>
<g fill="none" stroke="#a8a8a8" stroke-width="2" stroke-linecap="round" stroke-linejoin="round"><line x1="2837" y1="123.5" x2="2862" y2="123.5"/><polyline points="2843.5,117 2837,123.5 2843.5,130"/><line x1="2837" y1="139.5" x2="2862" y2="139.5"/><polyline points="2855.5,133 2862,139.5 2855.5,146"/></g>
<g stroke="#a8a8a8" stroke-width="1.8" stroke-linecap="round"><line x1="2889.5" y1="122.5" x2="2900.5" y2="122.5"/><line x1="2889.5" y1="128.5" x2="2897" y2="128.5"/><line x1="2889.5" y1="134.5" x2="2900.5" y2="134.5"/><line x1="2889.5" y1="140.5" x2="2897" y2="140.5"/></g><rect x="2905.5" y="121" width="15.5" height="22" rx="3" fill="#a8a8a8"/>
<line x1="2943" y1="120" x2="2943" y2="144" stroke="#3a3a3a" stroke-width="1.5"/>
<g stroke="#a8a8a8" stroke-width="2" stroke-linecap="round"><line x1="2979.5" y1="121.5" x2="2979.5" y2="143.5"/><line x1="2968.5" y1="132.5" x2="2990.5" y2="132.5"/></g>
<g fill="none" stroke="#eaeaea" stroke-width="2" stroke-linejoin="round"><path d="M2287.5,190.5 h14.5 M2290,190.5 l1,11 q-6,3 -6,8.5 h19.5 q0,-5.5 -6,-8.5 l1,-11"/><line x1="2294.8" y1="210" x2="2294.8" y2="221.5" stroke-linecap="round"/></g>
<path d="M2367.5,206 q14.5,-17 29,0 q-14.5,17 -29,0z" fill="#fff"/><circle cx="2381.7" cy="206" r="5.5" fill="#22335a"/><circle cx="2381.7" cy="206" r="2.2" fill="#fff"/>
<circle cx="2645" cy="906.5" r="129" fill="none" stroke="#1e1e1e" stroke-width="3.6"/>
<line x1="2516" y1="906.7" x2="2774" y2="906.7" stroke="#1e1e1e" stroke-width="1.7"/>
<line x1="2642" y1="906.7" x2="2708.5" y2="797" stroke="#1e1e1e" stroke-width="1.7"/>
<circle cx="2642" cy="906.7" r="5.3" fill="#1e1e1e"/>
<text x="2657" y="850" font-family="Liberation Serif" font-style="italic" font-size="44" fill="#1e1e1e" stroke="#1e1e1e" stroke-width="0.8">r</text>
<text x="2606" y="952" font-family="Liberation Serif" font-style="italic" font-size="44" fill="#1e1e1e" stroke="#1e1e1e" stroke-width="0.6">d</text>
<circle cx="2295" cy="1786" r="14" fill="#3a82f6"/><path d="M2290.5,1779.5 v13 l10.5,-6.5z" fill="#141414"/>
<rect x="2332" y="1775" width="23.5" height="23.5" rx="3" fill="none" stroke="#e8e8e8" stroke-width="2"/><path d="M2340,1779.5 v13.5 l3.2,-3 l2.5,5 l2,-1 l-2.5,-4.8 h4.5z" fill="#e8e8e8"/>
<g fill="none" stroke="#e8e8e8" stroke-width="1.9"><rect x="2380" y="1775" width="7.5" height="10.5" rx="2.2"/><rect x="2380" y="1789" width="7.5" height="10.5" rx="2.2"/><rect x="2391" y="1775" width="7.5" height="10.5" rx="2.2"/><rect x="2391" y="1789" width="7.5" height="10.5" rx="2.2"/><rect x="2402" y="1775" width="7.5" height="10.5" rx="2.2"/><rect x="2402" y="1789" width="7.5" height="10.5" rx="2.2"/></g>
<line x1="2437" y1="1772" x2="2437" y2="1800" stroke="#444" stroke-width="1.5"/>
<rect x="2466.5" y="1774" width="25" height="11" rx="5.5" fill="none" stroke="#e8e8e8" stroke-width="1.9"/><rect x="2469" y="1776.5" width="11.5" height="6" rx="3" fill="#e8e8e8"/><rect x="2466" y="1788" width="26" height="11.5" rx="5.75" fill="#e8e8e8"/><rect x="2478.5" y="1790.3" width="11" height="7" rx="3.5" fill="#1e1e1e"/>
<line x1="2522" y1="1772" x2="2522" y2="1800" stroke="#444" stroke-width="1.5"/>
<rect x="2553" y="1773" width="16" height="27.5" rx="3" fill="#4a4a4a" stroke="#e8e8e8" stroke-width="2"/><line x1="2558.5" y1="1776.5" x2="2563.5" y2="1776.5" stroke="#e8e8e8" stroke-width="1.6"/><line x1="2557.5" y1="1797" x2="2564.5" y2="1797" stroke="#e8e8e8" stroke-width="1.4"/>
<circle cx="2835.5" cy="1784.5" r="10" fill="none" stroke="#eeeeee" stroke-width="2"/><line x1="2842.5" y1="1791.5" x2="2850.0" y2="1799.0" stroke="#eeeeee" stroke-width="2.5" stroke-linecap="round"/><line x1="2830.5" y1="1784.5" x2="2840.5" y2="1784.5" stroke="#eeeeee" stroke-width="2"/>
<circle cx="2884.5" cy="1784.5" r="10" fill="none" stroke="#eeeeee" stroke-width="2"/><line x1="2891.5" y1="1791.5" x2="2899.0" y2="1799.0" stroke="#eeeeee" stroke-width="2.5" stroke-linecap="round"/><path d="M2882.5,1781.5 l2.5,-2.5 v11" fill="none" stroke="#eeeeee" stroke-width="1.8"/>
<circle cx="2933.5" cy="1784.5" r="10" fill="none" stroke="#8a8a8a" stroke-width="2"/><line x1="2940.5" y1="1791.5" x2="2948.0" y2="1799.0" stroke="#8a8a8a" stroke-width="2.5" stroke-linecap="round"/><rect x="2929.5" y="1780.5" width="8" height="8" rx="1" fill="none" stroke="#8a8a8a" stroke-width="1.8"/>
<circle cx="2982.5" cy="1784.5" r="10" fill="none" stroke="#eeeeee" stroke-width="2"/><line x1="2989.5" y1="1791.5" x2="2997.0" y2="1799.0" stroke="#eeeeee" stroke-width="2.5" stroke-linecap="round"/><path d="M2977.5,1784.5 h10 M2982.5,1779.5 v10" stroke="#eeeeee" stroke-width="2"/>
<path d="M647.5,1850 h23 q2,0 3.2,1.6 l5.3,9.2 q0,0.2 0,0.4 l-5.3,9.2 q-1.2,1.6 -3.2,1.6 h-23 a3.5,3.5 0 0 1 -3.5,-3.5 v-15 a3.5,3.5 0 0 1 3.5,-3.5z" fill="#3478f6"/>
<rect x="2958" y="1849" width="24" height="23.5" rx="3" fill="none" stroke="#9b9b9b" stroke-width="2"/><rect x="2961" y="1864" width="18" height="5" rx="1" fill="#9b9b9b"/>
</svg>

</div>
</body></html>
